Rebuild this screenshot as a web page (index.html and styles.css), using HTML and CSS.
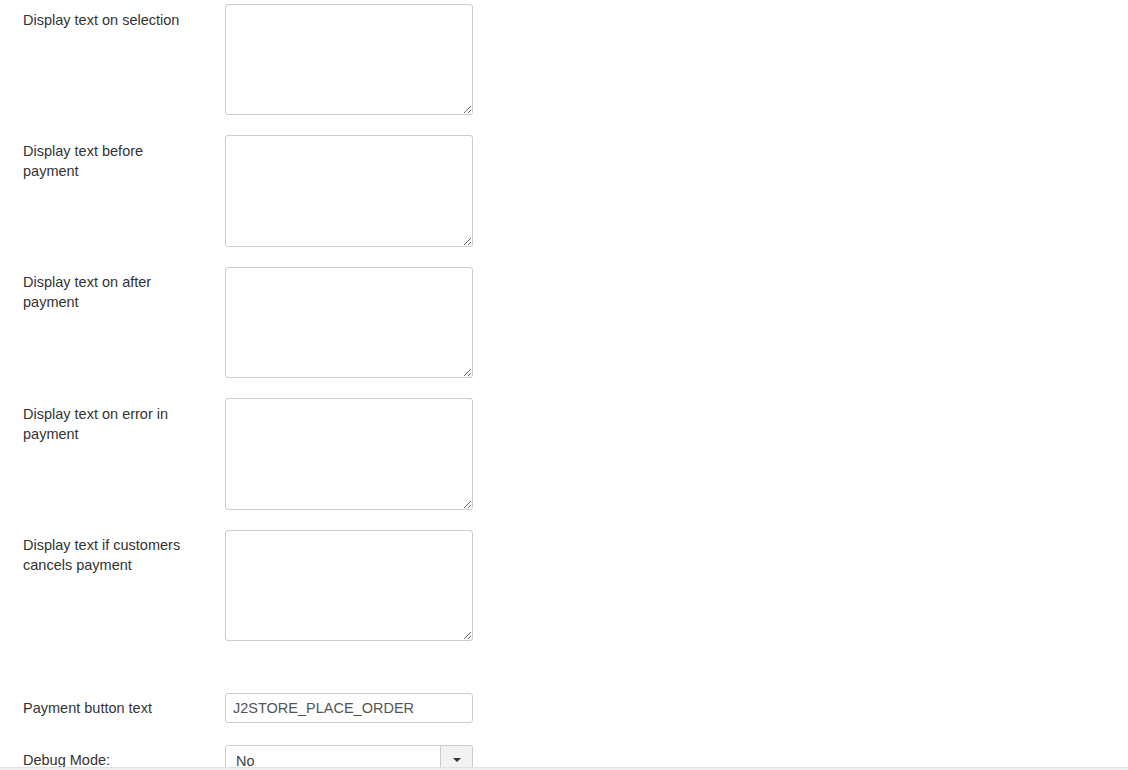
FILE: index.html
```html
<!DOCTYPE html>
<html lang="en">
<head>
<meta charset="utf-8">
<title>Payment settings</title>
<link rel="stylesheet" href="styles.css">
</head>
<body>
<div class="page">
  <form class="form">
    <div class="group">
      <label class="label">Display text on selection</label>
      <div class="controls"><textarea class="area"></textarea></div>
    </div>
    <div class="group">
      <label class="label">Display text before payment</label>
      <div class="controls"><textarea class="area"></textarea></div>
    </div>
    <div class="group">
      <label class="label">Display text on after payment</label>
      <div class="controls"><textarea class="area"></textarea></div>
    </div>
    <div class="group">
      <label class="label">Display text on error in payment</label>
      <div class="controls"><textarea class="area"></textarea></div>
    </div>
    <div class="group">
      <label class="label">Display text if customers cancels payment</label>
      <div class="controls"><textarea class="area"></textarea></div>
    </div>
    <div class="group spacer"></div>
    <div class="group group-input">
      <label class="label">Payment button text</label>
      <div class="controls"><input class="text" type="text" value="J2STORE_PLACE_ORDER"></div>
    </div>
    <div class="group group-input">
      <label class="label">Debug Mode:</label>
      <div class="controls">
        <div class="select">
          <span class="select-value">No</span>
          <span class="select-btn"><span class="caret"></span></span>
        </div>
      </div>
    </div>
  </form>
</div>
<div class="bottom-bar"></div>
</body>
</html>
```
FILE: styles.css
```css
html, body {
  margin: 0;
  padding: 0;
  background: #fff;
}
body {
  font-family: "Liberation Sans", Arial, sans-serif;
  font-size: 14.5px;
  line-height: 20px;
  color: #333;
}
.page {
  height: 767px;
  overflow: hidden;
  padding: 4px 0 0 23px;
  box-sizing: border-box;
}
.group {
  display: grid;
  grid-template-columns: 202px 248px;
  margin-bottom: 20px;
}
.group-input {
  margin-bottom: 22px;
}
.spacer {
  height: 12px;
}
.label {
  max-width: 162px;
  padding-top: 5.5px;
}
.group-input .label {
  padding-top: 5px;
}
.area {
  display: block;
  box-sizing: border-box;
  width: 248px;
  height: 111.4px;
  margin: 0;
  padding: 4px 7px;
  border: 1px solid #ccc;
  border-radius: 3px;
  font: inherit;
  color: #555;
  background: #fff;
  resize: both;
}
.text {
  display: block;
  box-sizing: border-box;
  width: 248px;
  height: 30px;
  margin: 0;
  padding: 4px 7px;
  border: 1px solid #ccc;
  border-radius: 3px;
  font-family: "Liberation Sans", Arial, sans-serif;
  font-size: 14.5px;
  color: #555;
  background: #fff;
}
.select {
  box-sizing: border-box;
  width: 248px;
  height: 30px;
  border: 1px solid #ccc;
  border-radius: 3px;
  display: flex;
  align-items: stretch;
  background: #fff;
  overflow: hidden;
}
.select-value {
  flex: 1;
  padding: 5px 10px;
  color: #444;
}
.select-btn {
  width: 31px;
  border-left: 1px solid #ccc;
  background: #f2f2f2;
  display: flex;
  align-items: center;
  justify-content: center;
}
.caret {
  width: 0;
  height: 0;
  border-left: 4px solid transparent;
  border-right: 4px solid transparent;
  border-top: 4px solid #333;
}
.bottom-bar {
  height: 3px;
  background: #eee;
  border-top: 1px solid #e2e2e2;
  box-sizing: border-box;
}
```
